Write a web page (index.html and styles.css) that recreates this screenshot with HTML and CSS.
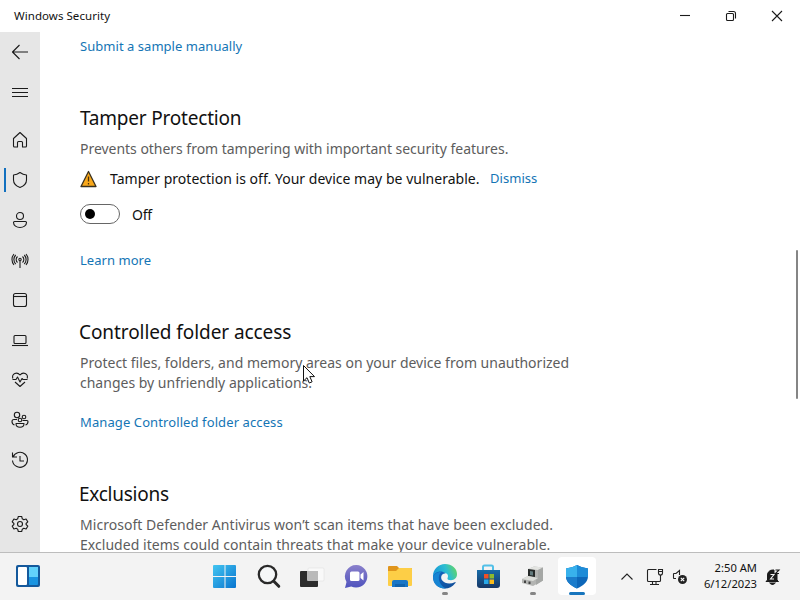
FILE: index.html
```html
<!DOCTYPE html>
<html lang="en">

<head>
  <meta charset="utf-8">
  <meta name="viewport" content="width=device-width, initial-scale=1">
  <title>Windows Security</title>
  <link rel="stylesheet" href="styles.css">
</head>

<body>

  <!-- Title bar -->
  <header class="titlebar">
    <span class="titlebar-name">Windows Security</span>
    <div class="window-buttons">
      <button type="button" aria-label="Minimize">
        <svg width="12" height="12" viewBox="0 0 12 12"><path d="M1 5.5h10" /></svg>
      </button>
      <button type="button" aria-label="Restore">
        <svg width="12" height="12" viewBox="0 0 12 12"><rect x="1.5" y="3.5" width="7" height="7" rx="1" /><path d="M3.5 1.5h5a2 2 0 0 1 2 2v5" /></svg>
      </button>
      <button type="button" aria-label="Close">
        <svg width="12" height="12" viewBox="0 0 12 12"><path d="M1 1l10 10M11 1L1 11" /></svg>
      </button>
    </div>
  </header>

  <div class="window">
    <!-- Sidebar -->
    <nav class="sidebar">
      <a class="nav-item">
        <svg viewBox="0 0 20 20"><path d="M18 10H2.5M9.5 3l-7 7 7 7" /></svg>
      </a>
      <a class="nav-item">
        <svg viewBox="0 0 20 20"><path d="M2 6.5h16M2 10.5h16M2 14.5h16" /></svg>
      </a>
      <a class="nav-item nav-home">
        <svg viewBox="0 0 20 20"><path d="M3.5 8.5L10 2.5l6.500 6v7.500q0 1-1 1h-3v-4.500q0-1-1-1h-3q-1 0-1 1V17h-3q-1 0-1-1z" /></svg>
      </a>
      <a class="nav-item active">
        <svg viewBox="0 0 20 20"><path d="M10 2.500q3 2.200 6.500 2.500v5c0 3.500-2.500 6-6.500 7.500C6 16 3.500 13.500 3.500 10V5Q7 4.700 10 2.500z" /></svg>
      </a>
      <a class="nav-item">
        <svg viewBox="0 0 20 20"><circle cx="10" cy="6" r="3.500" /><path d="M4.500 11.500h11q1 0 1 1c0 3-3 5-6.500 5s-6.500-2-6.500-5q0-1 1-1z" /></svg>
      </a>
      <a class="nav-item">
        <svg viewBox="0 0 20 20"><circle cx="10" cy="9.500" r="1.200" /><path d="M10 11v7M7.500 12.500a4 4 0 0 1 0-6M12.500 12.500a4 4 0 0 0 0-6M5.700 14a6.500 6.500 0 0 1 0-9M14.300 14a6.500 6.500 0 0 0 0-9M4 15a8.500 8.500 0 0 1 0-11M16 15a8.500 8.500 0 0 0 0-11" /></svg>
      </a>
      <a class="nav-item">
        <svg viewBox="0 0 20 20"><rect x="3.500" y="3.500" width="13" height="13" rx="2" /><path d="M3.500 6.500h13" /></svg>
      </a>
      <a class="nav-item">
        <svg viewBox="0 0 20 20"><rect x="4" y="5.500" width="12" height="8" rx="1" /><path d="M2 15.500h16" /></svg>
      </a>
      <a class="nav-item">
        <svg viewBox="0 0 20 20"><path d="M2.800 8.500C1.500 3.500 7 1.500 10 5 13 1.500 18.500 3.500 17.200 8.500M2.500 9.500H6l1.500-2.500 2.500 5 2-3.500 1 1h4.500M5 12l5 4.500 5-4.500" /></svg>
      </a>
      <a class="nav-item">
        <svg viewBox="0 0 20 20"><circle cx="7" cy="5" r="2.700" /><circle cx="14" cy="7" r="1.800" /><circle cx="10" cy="10" r="1.800" /><path d="M6 13.500h8c0 5-8 5-8 0zM7 9.500H4q-2 0-2 2c0 2 1 3 2.500 3.500M12.500 10.500h4.500q1 0 1 1c0 2-1 3-2.500 3.500" /></svg>
      </a>
      <a class="nav-item">
        <svg viewBox="0 0 20 20"><path d="M2.500 2.500v4.500H7M3 7a7.500 7.500 0 1 1-.500 3.500M10 6v5h4" /></svg>
      </a>
      <a class="nav-item nav-settings">
        <svg viewBox="0 0 20 20"><circle cx="10" cy="10" r="2.500" /><path d="M8.300 2.500h3.400l.600 2.300 1.500.900 2.300-.700 1.700 2.900-1.700 1.600v1l1.700 1.600-1.700 2.900-2.300-.700-1.500.900-.600 2.300H8.300l-.600-2.300-1.500-.900-2.300.700-1.700-2.900 1.700-1.600v-1L2.200 7.900 3.900 5l2.300.700 1.500-.900z" /></svg>
      </a>
    </nav>

    <!-- Page content -->
    <main class="content">
      <a class="link">Submit a sample manually</a>

      <section class="setting tamper">
        <h2>Tamper Protection</h2>
        <p class="desc">Prevents others from tampering with important security features.</p>
        <div class="alert">
          <svg width="18" height="18" viewBox="0 0 18 18"><path d="M8.500 1.500L16 16.500H1z" fill="#f9a81a" stroke="#39301f" stroke-width="1.300" stroke-linejoin="round" /><path d="M8.500 6.500v5M8.500 13v1.500" stroke="#4a3008" stroke-width="1.300" /></svg>
          <span class="alert-text">Tamper protection is off. Your device may be vulnerable.</span>
          <a class="link dismiss">Dismiss</a>
        </div>
        <div class="toggle-row">
          <span class="toggle"></span>
          <span class="toggle-label">Off</span>
        </div>
        <a class="link">Learn more</a>
      </section>

      <section class="setting folder">
        <h2>Controlled folder access</h2>
        <p class="desc">Protect files, folders, and memory areas on your device from unauthorized<br>changes by unfriendly applications.</p>
        <a class="link manage">Manage Controlled folder access</a>
      </section>

      <section class="setting exclusions">
        <h2>Exclusions</h2>
        <p class="desc">Microsoft Defender Antivirus won’t scan items that have been excluded.<br>Excluded items could contain threats that make your device vulnerable.</p>
      </section>
    </main>
    <div class="scroll"><div class="scroll-thumb"></div></div>
  </div>

  <!-- Taskbar -->
  <footer class="taskbar">
    <div class="widgets">
      <svg width="24" height="24" viewBox="0 0 24 24"><rect width="24" height="22" y="1" rx="2" fill="#14599c" /><rect x="2" y="3" width="9" height="18" rx="1" fill="#fff" /><rect x="13" y="3" width="9" height="10" fill="#62d2fb" /><path d="M13 13h9v7q0 1-1 1h-8z" fill="#1994e1" /></svg>
    </div>
    <div class="apps">
      <!-- Start -->
      <div class="app">
        <svg viewBox="0 0 26 26"><defs><linearGradient id="start" x1="0" y1="0" x2="1" y2="1"><stop offset="0" stop-color="#43c5f1" /><stop offset="1" stop-color="#0874cf" /></linearGradient></defs><path d="M2 1h10.500v11H1V2q0-1 1-1zM13.500 1H23q1 0 1 1v10H13.500zM1 13h11.500v11H2q-1 0-1-1zM13.500 13H24v10q0 1-1 1h-9.500z" fill="url(#start)" /></svg>
      </div>
      <!-- Search -->
      <div class="app">
        <svg viewBox="0 0 26 26"><circle cx="11.500" cy="10.500" r="8.700" fill="#f5f7f8" stroke="#292929" stroke-width="2.300" /><path d="M17.800 17.300l5 5" stroke="#292929" stroke-width="3" stroke-linecap="round" /></svg>
      </div>
      <!-- Task view -->
      <div class="app">
        <svg viewBox="0 0 26 26"><rect x="8" y="4" width="16" height="13" rx="1" fill="#f9f9f9" stroke="#e0e0e0" stroke-width=".600" /><rect x="0" y="7" width="18" height="16" rx="1" fill="#2c2c2c" /><path d="M7 7h11v10H8q-1 0-1-1z" fill="#b9b9b9" /></svg>
      </div>
      <!-- Chat -->
      <div class="app">
        <svg viewBox="0 0 26 26"><defs><linearGradient id="chat" x1="0" y1="0" x2="0" y2="1"><stop offset="0" stop-color="#8a80cb" /><stop offset="1" stop-color="#4e52bd" /></linearGradient></defs><path d="M12.500 1a11.300 11.300 0 1 1-5.300 21.500L1 24l1.500-6A11.300 11.300 0 0 1 12.500 1z" fill="url(#chat)" /><rect x="6" y="7.500" width="9.500" height="9.500" rx="1.500" fill="#fff" /><path d="M16.500 10.500l3-2.500v8.500l-3-2.500z" fill="#fff" /></svg>
      </div>
      <!-- File Explorer -->
      <div class="app">
        <svg viewBox="0 0 26 26"><path d="M0 3q0-1 1-1h8l2 2h12q1 0 1 1v5H0z" fill="#e0951c" /><path d="M0 7h8l3-3h12q1 0 1 1v16q0 1-1 1H1q-1 0-1-1z" fill="#fdce46" /><path d="M4 23v-5q0-2 2-2h12q2 0 2 2v5z" fill="#1876c6" /><path d="M7 20h10v3H7z" fill="#0f63ad" /></svg>
      </div>
      <!-- Edge -->
      <div class="app running">
        <svg viewBox="0 0 26 26"><defs><linearGradient id="edge" x1="0" y1=".5" x2="1" y2=".2"><stop offset="0" stop-color="#1596d8" /><stop offset=".55" stop-color="#2dbdd1" /><stop offset="1" stop-color="#67d75c" /></linearGradient><linearGradient id="edge-wave" x1="0" y1="0" x2="1" y2="1"><stop offset="0" stop-color="#1268c4" /><stop offset="1" stop-color="#114b94" /></linearGradient></defs><path d="M1 12C1 5 6.500 0 13 0c7 0 12 4.500 12 10 0 4-2.700 6.200-6 6.200-2.500 0-4-.9-3.500-2 1.200-2.200.3-5.200-3.200-5.200C6 8 1.500 12 1 15z" fill="url(#edge)" /><path d="M1 13C2.500 8 9 5.500 13.500 9.500c-4-.5-5.500 4-3.200 7 2.500 3.300 8 3.700 12.500 1.700.8-.3 1 .2.600.8C20.500 23 17 24.500 13 24.500 6 24.500 1 19.500 1 13z" fill="url(#edge-wave)" /><path d="M1 13c1.500-3 4.500-5.300 8.500-5.300C5 11 6 21 14 24.400 6 25 1 19.500 1 13z" fill="#1684d3" /></svg>
      </div>
      <!-- Store -->
      <div class="app">
        <svg viewBox="0 0 26 26"><defs><linearGradient id="store" x1="0" y1="0" x2="0" y2="1"><stop offset="0" stop-color="#176ba8" /><stop offset="1" stop-color="#163766" /></linearGradient></defs><path d="M7 7V3q0-1.500 1.500-1.500h7Q17 1.500 17 3v4" fill="none" stroke="#52c0e8" stroke-width="2" /><path d="M1 6h23v15q0 3-3 3H4q-3 0-3-3z" fill="url(#store)" /><path d="M8 10h4.500v4.500H8z" fill="#ef5027" /><path d="M13.500 10H18v4.500h-4.500z" fill="#8cba2d" /><path d="M8 15.500h4.500V20H8z" fill="#28a8e8" /><path d="M13.500 15.500H18V20h-4.500z" fill="#f8bb1c" /></svg>
      </div>
      <!-- System tool -->
      <div class="app running">
        <svg viewBox="0 0 26 26"><path d="M8 5l6-2.500 9 1v13L13 22l-11-3v-4l6-3z" fill="#b3b4b2" /><path d="M14 2.500l9 1-5 2.500-10-1z" fill="#e3e4e1" /><path d="M18 6l5-2.500v13L16 21v-5l2-2z" fill="#a5a7a5" /><path d="M8 5l7 1v7l-7-1z" fill="#262928" /><path d="M10 7l3 .500v4l-3-.500z" fill="#627a7d" /><path d="M2 15l6-3 10 2-5 3z" fill="#dddeda" /><path d="M5 16.500v2.500M9.500 17.500V20" stroke="#444" stroke-width="2" /></svg>
      </div>
      <!-- Windows Security -->
      <div class="app running current">
        <svg viewBox="0 0 26 26"><path d="M13 1q5 3 11 3.500V12c0 6-5 10-11 12.500C7 22 2 18 2 12V4.500Q8 4 13 1z" fill="#0d67b9" /><path d="M13 1v12H2V4.500Q8 4 13 1z" fill="#38b1ec" /><path d="M13 1q5 3 11 3.500V12v1H13z" fill="#1d8bd7" /><path d="M2 13h11v11.500C7.500 22 2 18 2 13z" fill="#1b7ccb" /></svg>
      </div>
    </div>
    <div class="tray">
      <svg class="tray-more" width="14" height="14" viewBox="0 0 14 14"><path d="M1.500 9.500L7 4l5.500 5.500" /></svg>
      <svg class="tray-network" width="18" height="18" viewBox="0 0 18 18"><path d="M10.500 1.500H2.500q-1 0-1 1v10q0 1 1 1h11q1 0 1-1V9M6.500 13.500v3M10 13.500v3M4 16.500h9M14.500 7v3M12.500 1.500h4V5q0 2-2 2t-2-2zM12.500 3.500h4" /></svg>
      <svg class="tray-volume" width="16" height="16" viewBox="0 0 16 16"><path d="M7.500 6V1.500L4 4.500H2q-.5 0-.5.500v4q0 .500.500.500h2" /><circle cx="10.500" cy="10.500" r="4.500" fill="#222" stroke="none" /><path d="M8.800 8.800l3.400 3.400M12.200 8.800l-3.400 3.400" stroke="#fff" /></svg>
      <div class="clock">
        <span>2:50 AM</span>
        <span class="date">6/12/2023</span>
      </div>
      <svg class="tray-bell" width="16" height="18" viewBox="0 0 16 18"><path d="M2.500 12V7C2.500 4 5 2 7.500 2H9v4h3v6l1.500 1.500H1z" fill="#1b1b1b" stroke="#1b1b1b" stroke-width="1" stroke-linejoin="round" /><path d="M5 15h5q-2.500 3-5 0z" fill="#1b1b1b" /><path d="M5.500 6.500H9L5.500 11H9" stroke="#f3f3f3" /><path d="M10.500 2H14l-3.500 3.500H14" stroke="#1b1b1b" /></svg>
    </div>
  </footer>

  <!-- Mouse pointer -->
  <svg class="pointer" width="14" height="21" viewBox="0 0 14 21"><path d="M.500 .500v15.500l3.500-3.300 2.300 5.300 2.800-1.200-2.300-5.200h4.700z" fill="#fff" stroke="#111" stroke-linejoin="round" /></svg>

</body>

</html>
```
FILE: styles.css
```css
* {
  box-sizing: border-box;
}

body {
  margin: 0;
  width: 800px;
  height: 600px;
  display: flex;
  flex-direction: column;
  overflow: hidden;
  background-color: #fff;
  color: #111;
  font-family: "Noto Sans", "Open Sans", sans-serif;
  font-size: 14px;
  line-height: 20px;
}

svg {
  display: block;
  flex: none;
}

/* Title bar */
.titlebar {
  flex: none;
  height: 32px;
  display: flex;
  justify-content: space-between;
  align-items: center;
  padding-left: 14px;
}

.titlebar-name {
  font-size: 11.5px;
  letter-spacing: 0.05px;
}

.window-buttons {
  display: flex;
}

.window-buttons button {
  width: 46px;
  height: 32px;
  padding: 0;
  border: 0;
  background: none;
  display: flex;
  align-items: center;
  justify-content: center;
}

.window-buttons svg,
.nav-item svg {
  fill: none;
  stroke: #1b1b1b;
  stroke-width: 1.1;
}

.window {
  height: 520px;
  display: flex;
  overflow: hidden;
}

/* Sidebar */
.sidebar {
  flex: none;
  width: 40px;
  background-color: #e6e6e6;
}

.nav-item {
  height: 40px;
  display: flex;
  align-items: center;
  justify-content: center;
}

.nav-item svg {
  width: 20px;
  height: 20px;
  stroke-linejoin: round;
}

.nav-home {
  margin-top: 8px;
}

.nav-settings {
  margin-top: 24px;
}

.nav-item.active {
  justify-content: flex-start;
  gap: 4px;
  padding-left: 4px;
}

.nav-item.active::before {
  content: "";
  width: 2px;
  height: 24px;
  background-color: #1270bf;
}

/* Content */
.content {
  flex: 1;
  padding: 4px 0 0 40px;
}

h2 {
  margin: 0 0 7px;
  font-size: 19px;
  font-weight: 400;
  line-height: 28px;
  letter-spacing: -0.2px;
}

.desc {
  margin: 0;
  color: #5d5d5d;
  white-space: nowrap;
}

.link {
  display: block;
  color: #1475b5;
  font-size: 13px;
  letter-spacing: 0.04px;
}

.setting {
  height: 214px;
}

.tamper {
  margin-top: 48px;
}

.tamper .desc {
  letter-spacing: -0.03px;
}

.folder {
  height: 162px;
}

.folder h2,
.exclusions h2 {
  margin-left: -1px;
  letter-spacing: -0.08px;
}

.exclusions h2 {
  letter-spacing: -0.25px;
}

.exclusions .desc {
  letter-spacing: 0.04px;
}

.alert {
  display: flex;
  align-items: center;
  height: 20px;
  margin-top: 10px;
  white-space: nowrap;
}

.alert-text {
  width: 380px;
  padding-left: 12px;
  margin-right: 12px;
  letter-spacing: 0.02px;
}

.dismiss {
  padding-bottom: 2px;
}

.toggle-row {
  display: flex;
  align-items: center;
  gap: 12px;
  height: 20px;
  margin: 15px 0 26px;
}

.toggle {
  width: 40px;
  height: 20px;
  border: 1px solid #666;
  border-radius: 10px;
  display: flex;
  align-items: center;
  padding-left: 4px;
}

.toggle::before {
  content: "";
  width: 10px;
  height: 10px;
  border-radius: 50%;
  background-color: #000;
}

.toggle-label {
  padding-top: 2px;
  letter-spacing: -0.3px;
}

.manage {
  margin-top: 19px;
  letter-spacing: 0.1px;
}

/* Scrollbar */
.scroll {
  width: 4px;
  padding-top: 218px;
}

.scroll-thumb {
  width: 2px;
  height: 149px;
  border-radius: 1px;
  background-color: #858585;
}

/* Taskbar */
.taskbar {
  height: 48px;
  display: flex;
  background-color: #f3f3f3;
  border-top: 1px solid #bdbdbd;
}

.widgets {
  width: 203px;
  padding: 11px 0 0 16px;
}

.apps {
  display: flex;
}

.app {
  width: 44px;
  height: 47px;
  padding-top: 11px;
  display: flex;
  flex-direction: column;
  align-items: center;
}

.app svg {
  width: 26px;
  height: 26px;
}

.app.running::after {
  content: "";
  width: 6px;
  height: 3px;
  margin-top: 2px;
  border-radius: 2px;
  background-color: #858585;
}

.app.current {
  width: 38px;
  height: 38px;
  margin: 4px 3px 0;
  padding-top: 7px;
  border-radius: 4px;
  background-color: #fff;
}

.app.current::after {
  flex: none;
  width: 16px;
  background-color: #1775bd;
}

.tray {
  flex: 1;
  display: flex;
  align-items: center;
  padding-left: 21px;
}

.tray svg {
  fill: none;
  stroke: #222;
  stroke-width: 1.1;
}

.tray-network {
  margin-left: 12px;
}

.tray-volume {
  margin-left: 8px;
}

.clock {
  width: 69px;
  display: flex;
  flex-direction: column;
  align-items: flex-end;
  padding-bottom: 2px;
  font-size: 11.2px;
  line-height: 16px;
}

.tray-bell {
  margin-left: 8px;
}

.pointer {
  position: absolute;
  left: 303px;
  top: 365px;
}
```
